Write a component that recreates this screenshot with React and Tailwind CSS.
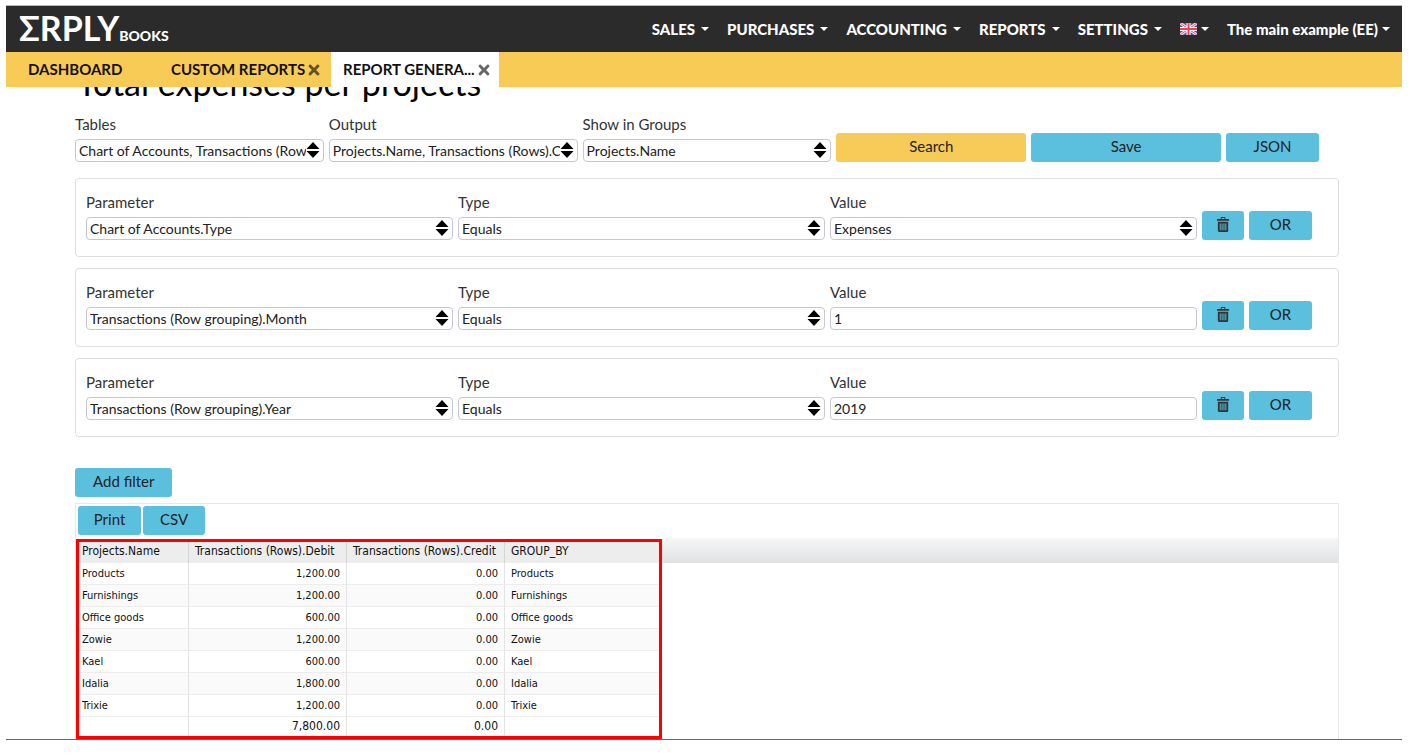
import { useState } from 'react'
import { FaTimes } from 'react-icons/fa'
import { ImBin } from 'react-icons/im'

const menus = ['SALES', 'PURCHASES', 'ACCOUNTING', 'REPORTS', 'SETTINGS']

const initialFilters = [
  { id: 1, parameter: 'Chart of Accounts.Type', type: 'Equals', value: 'Expenses', options: ['Expenses'] },
  { id: 2, parameter: 'Transactions (Row grouping).Month', type: 'Equals', value: '1' },
  { id: 3, parameter: 'Transactions (Row grouping).Year', type: 'Equals', value: '2019' },
]

const results = [
  { name: 'Products', debit: '1,200.00', credit: '0.00' },
  { name: 'Furnishings', debit: '1,200.00', credit: '0.00' },
  { name: 'Office goods', debit: '600.00', credit: '0.00' },
  { name: 'Zowie', debit: '1,200.00', credit: '0.00' },
  { name: 'Kael', debit: '600.00', credit: '0.00' },
  { name: 'Idalia', debit: '1,800.00', credit: '0.00' },
  { name: 'Trixie', debit: '1,200.00', credit: '0.00' },
]

function Caret() {
  return (
    <svg viewBox="0 0 8 4" className="h-1 w-2 fill-current" aria-hidden="true">
      <path d="M0 0h8L4 4z" />
    </svg>
  )
}

function Flag() {
  return (
    <svg viewBox="0 0 17 12" className="h-3 w-[17px]" role="img" aria-label="English">
      <path d="M0 0h17v12H0z" fill="#4a59a8" />
      <path d="M0 0l17 12M17 0L0 12" stroke="#f3e6ee" strokeWidth="3" />
      <path d="M0 0l17 12M17 0L0 12" stroke="#e8525c" strokeWidth="1" />
      <path d="M8.5 0v12M0 6h17" stroke="#fff" strokeWidth="4" />
      <path d="M8.5 0v12M0 6h17" stroke="#ee4350" strokeWidth="2" />
    </svg>
  )
}

function Button({ className = '', children, ...props }) {
  return (
    <button
      type="button"
      className={`flex h-[29px] items-center justify-center rounded-[3px] pb-0.5 text-[15px] text-[#222] ${className}`}
      {...props}
    >
      {children}
    </button>
  )
}

function Field({ id, label, value, options, onChange }) {
  const box =
    'block h-[23px] w-full appearance-none rounded-[4px] border border-[#c6c6d4] bg-white pl-[3px] text-[14px] leading-5 text-[#222] outline-none'

  return (
    <div className="min-w-0">
      <label htmlFor={id} className="mb-[5px] block text-[15px] leading-5 text-[#333]">
        {label}
      </label>
      {options ? (
        <div className="relative">
          <select id={id} value={value} onChange={onChange} className={`${box} pr-[17px]`}>
            {options.map((option) => (
              <option key={option}>{option}</option>
            ))}
          </select>
          <svg
            viewBox="0 0 14 16"
            className="pointer-events-none absolute top-[3px] right-1 h-4 w-[14px] fill-black"
            aria-hidden="true"
          >
            <path d="M7 0l6.500 7H.5zM.5 9h13L7 16z" />
          </svg>
        </div>
      ) : (
        <input id={id} type="text" value={value} onChange={onChange} className={box} />
      )}
    </div>
  )
}

function Tab({ active, closable, className = '', children }) {
  return (
    <div className={`flex items-center ${active ? 'bg-white' : ''} ${className}`}>
      <a href="#" className="whitespace-nowrap">
        {children}
      </a>
      {closable ? (
        <button type="button" aria-label="Close tab" className="ml-auto text-black/60">
          <FaTimes className="h-4 w-4" />
        </button>
      ) : null}
    </div>
  )
}

export default function App() {
  const [filters, setFilters] = useState(initialFilters)

  const removeFilter = (id) => setFilters((prev) => prev.filter((item) => item.id !== id))
  const updateFilter = (id, key) => (e) => {
    const { value } = e.target
    setFilters((prev) => prev.map((item) => (item.id === id ? { ...item, [key]: value } : item)))
  }
  const addFilter = () =>
    setFilters((prev) => [
      ...prev,
      { id: Date.now(), parameter: 'Chart of Accounts.Type', type: 'Equals', value: '' },
    ])

  return (
    <div className="bg-white px-[6px] pt-[5px] pr-2 font-[Lato,sans-serif]">
      <header className="relative z-10">
        <div className="flex h-[47px] items-center border-t border-[#b5bab8] bg-[#2b2b2b] pr-3 pl-[13px] text-white">
          <a href="#" className="flex items-baseline pb-0.5">
            <span className="text-[34px] leading-10 font-bold">ΣRPLY</span>
            <span className="text-[14px] font-black">BOOKS</span>
          </a>
          <nav className="ml-auto flex items-center gap-[18px] text-[15px] font-black">
            {menus.map((menu) => (
              <button key={menu} type="button" className="flex items-center gap-1.5">
                {menu}
                <Caret />
              </button>
            ))}
            <button type="button" className="flex items-center gap-1">
              <Flag />
              <Caret />
            </button>
            <button type="button" className="flex items-center gap-1">
              The main example (EE)
              <Caret />
            </button>
          </nav>
        </div>
        <div className="flex h-[35px] bg-[#f8cb57] text-[15px] font-bold text-[#111]">
          <Tab className="w-[153px] pl-[22px]">DASHBOARD</Tab>
          <Tab closable className="w-[172px] pr-[9px] pl-3">
            CUSTOM REPORTS
          </Tab>
          <Tab active closable className="w-[168px] pr-[7px] pl-3">
            REPORT GENERA...
          </Tab>
        </div>
      </header>

      <main className="border-b border-[#666] pr-[63px] pl-[69px]">
        <h1 className="-mt-6 pl-0.5 text-[34px] leading-10 text-black">Total expenses per projects</h1>

        <form
          className="mt-[11px] grid grid-cols-[249fr_249fr_249fr_190fr_190fr_93fr] items-end gap-[5px] pr-5"
          onSubmit={(e) => e.preventDefault()}
        >
          <Field id="tables" label="Tables" options={['Chart of Accounts, Transactions (Rows), Projects']} />
          <Field id="output" label="Output" options={['Projects.Name, Transactions (Rows).Credit']} />
          <Field id="groups" label="Show in Groups" options={['Projects.Name']} />
          <Button className="bg-[#f6cb57]">Search</Button>
          <Button className="bg-[#5bc0de]">Save</Button>
          <Button className="bg-[#5bc0de]">JSON</Button>
        </form>

        <div className="mt-4 space-y-[11px]">
          {filters.map((item) => (
            <section
              key={item.id}
              className="grid grid-cols-[367fr_367fr_367fr_42px_63px] items-end gap-[5px] rounded-[4px] border border-[#dedede] pt-[13px] pr-[26px] pb-4 pl-[10px]"
            >
              <Field
                id={`parameter-${item.id}`}
                label="Parameter"
                value={item.parameter}
                onChange={updateFilter(item.id, 'parameter')}
                options={initialFilters.map((f) => f.parameter)}
              />
              <Field
                id={`type-${item.id}`}
                label="Type"
                value={item.type}
                onChange={updateFilter(item.id, 'type')}
                options={['Equals', 'Not equals']}
              />
              <Field
                id={`value-${item.id}`}
                label="Value"
                value={item.value}
                onChange={updateFilter(item.id, 'value')}
                options={item.options}
              />
              <Button className="bg-[#5bc0de]" aria-label="Remove filter" onClick={() => removeFilter(item.id)}>
                <ImBin className="h-[15px] w-[15px] text-[#333]" />
              </Button>
              <Button className="bg-[#5bc0de]">OR</Button>
            </section>
          ))}
        </div>

        <Button className="mt-[31px] bg-[#5bc0de] px-[18px]" onClick={addFilter}>
          Add filter
        </Button>

        <section className="mt-1.5 border border-b-0 border-[#e8e8e8]">
          <div className="flex gap-0.5 px-0.5 pt-0.5 pb-[3px]">
            <Button className="w-[63px] bg-[#5bc0de]">Print</Button>
            <Button className="w-[62px] bg-[#5bc0de]">CSV</Button>
          </div>
          <div className="flex items-start font-['DejaVu_Sans_Condensed','DejaVu_Sans',sans-serif]">
            <div className="mt-px w-[586px] border-3 border-[#f00]">
              <table className="w-full table-fixed border-separate border-spacing-0 text-[11px] leading-[15px] text-[#111]">
                <colgroup>
                  <col className="w-[110px]" />
                  <col className="w-[158px]" />
                  <col className="w-[158px]" />
                  <col />
                </colgroup>
                <thead className="text-[12px]">
                  <tr className="h-[21px] bg-[#ededed] text-left whitespace-nowrap">
                    <th className="border-r border-[#d5d5d5] pb-0.5 pl-[3px] font-normal">Projects.Name</th>
                    <th className="border-r border-[#d5d5d5] pb-0.5 pl-1.5 font-normal">Transactions (Rows).Debit</th>
                    <th className="border-r border-[#d5d5d5] pb-0.5 pl-1.5 font-normal">Transactions (Rows).Credit</th>
                    <th className="pb-0.5 pl-1.5 font-normal">GROUP_BY</th>
                  </tr>
                </thead>
                <tbody>
                  {results.map((row) => (
                    <tr key={row.name} className="h-[22px] even:bg-[#fafafa]">
                      <td className="border-r border-b border-[#e3e3e3] border-b-[#ededed] pl-[3px]">{row.name}</td>
                      <td className="border-r border-b border-[#e3e3e3] border-b-[#ededed] pr-1.5 text-right">
                        {row.debit}
                      </td>
                      <td className="border-r border-b border-[#e3e3e3] border-b-[#ededed] pr-1.5 text-right">
                        {row.credit}
                      </td>
                      <td className="border-b border-b-[#ededed] pl-1.5">{row.name}</td>
                    </tr>
                  ))}
                </tbody>
                <tfoot>
                  <tr className="h-[19px] text-[12px]">
                    <td className="border-r border-[#e3e3e3]" />
                    <td className="border-r border-[#e3e3e3] pr-1.5 text-right">7,800.00</td>
                    <td className="border-r border-[#e3e3e3] pr-1.5 text-right">0.00</td>
                    <td />
                  </tr>
                </tfoot>
              </table>
            </div>
            <div className="h-[25px] flex-1 bg-linear-to-b from-[#f7f7f7] to-[#dfe1e3]" />
          </div>
        </section>
      </main>
    </div>
  )
}
